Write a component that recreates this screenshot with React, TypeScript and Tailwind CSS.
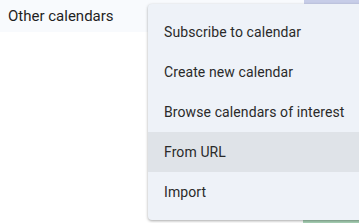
import React from 'react';

const items = [
  'Subscribe to calendar',
  'Create new calendar',
  'Browse calendars of interest',
  'From URL',
  'Import',
];

export default function App() {
  return (
    <div
      className="relative w-[359px] h-[223px] overflow-hidden bg-white text-[#1f1f1f]"
      style={{ fontFamily: 'Roboto, "Noto Sans", sans-serif' }}
    >
      <div className="h-8 bg-[#f8fafd] flex items-center pl-2 text-[15px]">Other calendars</div>
      {/* bits of page behind the menu */}
      <div className="absolute left-[304px] top-0 w-[60px] h-[8px] bg-[#c7cde8]" />
      <div className="absolute left-[303px] top-[216px] w-[60px] h-[10px] bg-[#a9d3b7]" />

      <div className="absolute left-[148px] top-[4px] w-[230px] rounded-[4px] bg-[#eef2f8] py-2 text-[#2a2a2a] shadow-[0_1px_3px_rgba(0,0,0,0.35)]">
        {items.map((label) => (
          <div
            key={label}
            className={
              'h-10 flex items-center pl-4 text-[14px] tracking-[0.1px] whitespace-nowrap ' +
              (label === 'From URL' ? 'bg-[#dfe3e8]' : '')
            }
          >
            {label}
          </div>
        ))}
      </div>
    </div>
  );
}
